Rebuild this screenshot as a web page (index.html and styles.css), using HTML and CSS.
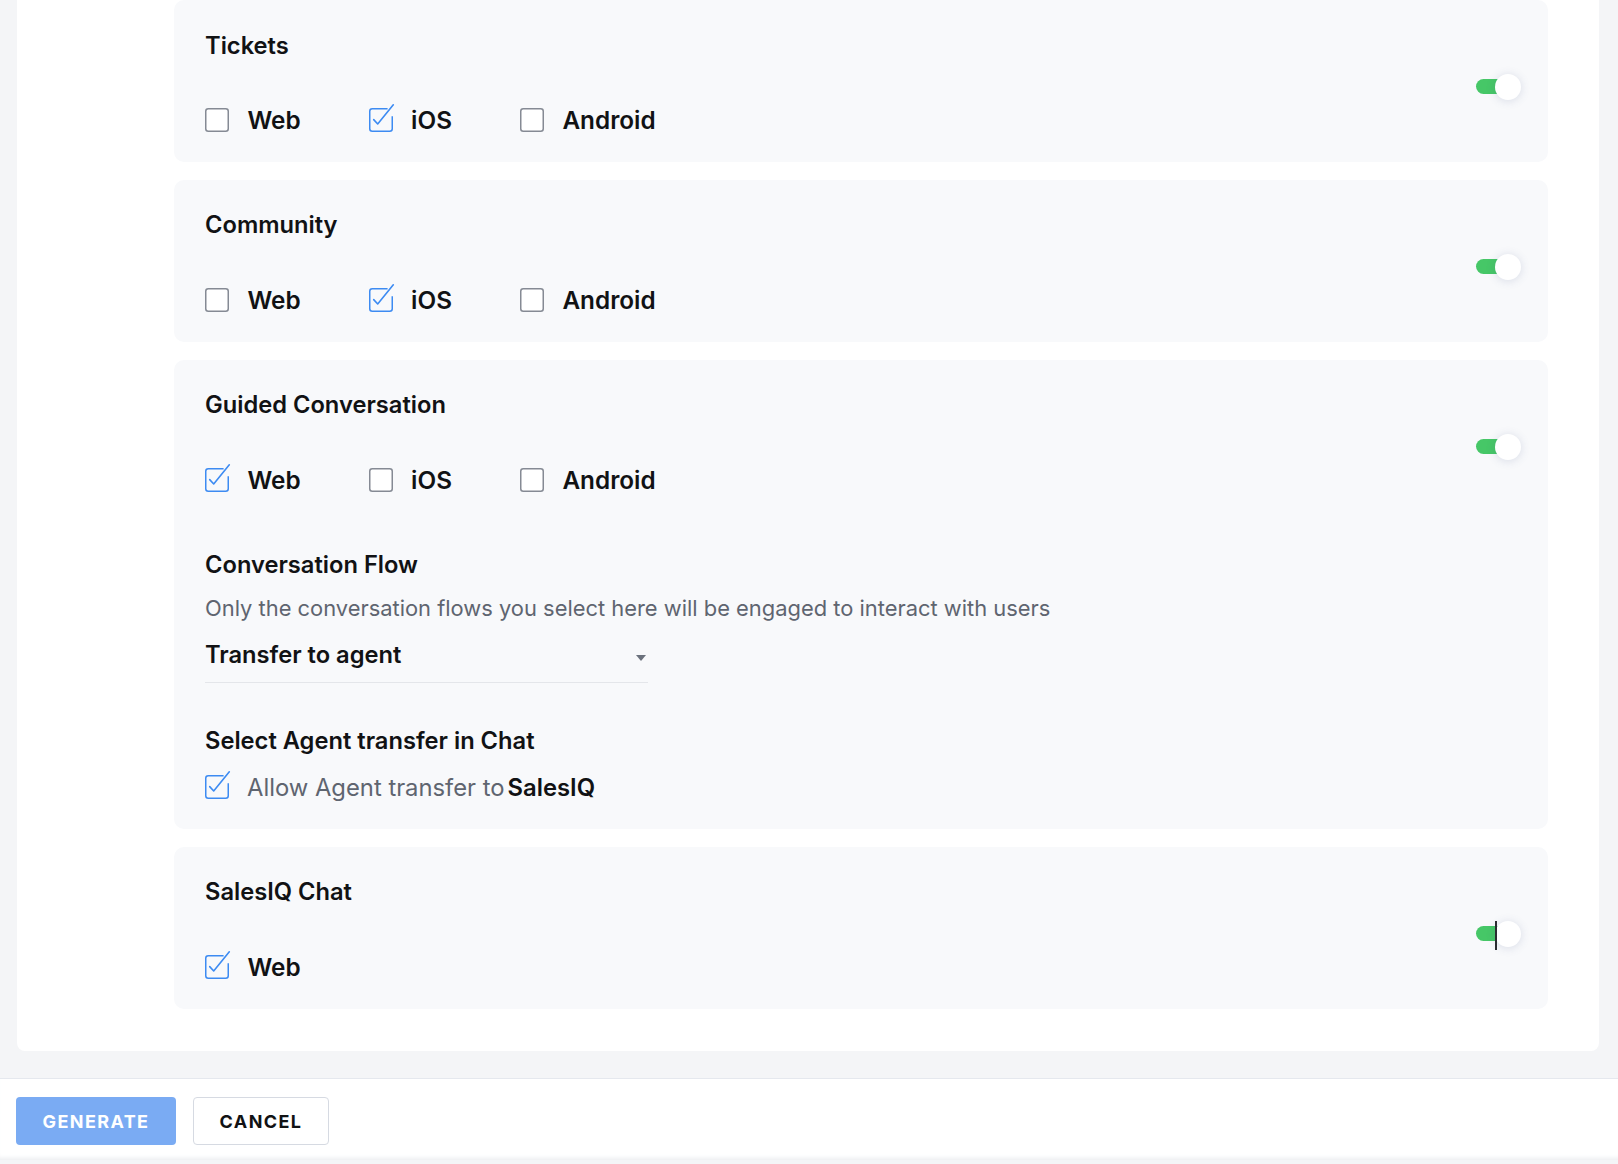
FILE: index.html
```html
<!DOCTYPE html>
<html lang="en">
<head>
    <meta charset="UTF-8">
    <title>Channels</title>
    <link rel="stylesheet" href="styles.css">
</head>
<body>
    <div class="main">
        <div class="panel">

            <div class="card">
                <div class="card-body">
                    <div class="card-title">Tickets</div>
                    <div class="options">
                        <label class="option"><span class="box"></span>Web</label>
                        <label class="option"><span class="box checked"></span>iOS</label>
                        <label class="option"><span class="box"></span>Android</label>
                    </div>
                </div>
                <div class="toggle"><span class="track"></span><span class="knob"></span></div>
            </div>

            <div class="card">
                <div class="card-body">
                    <div class="card-title">Community</div>
                    <div class="options">
                        <label class="option"><span class="box"></span>Web</label>
                        <label class="option"><span class="box checked"></span>iOS</label>
                        <label class="option"><span class="box"></span>Android</label>
                    </div>
                </div>
                <div class="toggle"><span class="track"></span><span class="knob"></span></div>
            </div>

            <div class="card">
                <div class="card-body">
                    <div class="card-title">Guided Conversation</div>
                    <div class="options">
                        <label class="option"><span class="box checked"></span>Web</label>
                        <label class="option"><span class="box"></span>iOS</label>
                        <label class="option"><span class="box"></span>Android</label>
                    </div>

                    <div class="sub-title flow-title">Conversation Flow</div>
                    <div class="desc">Only the conversation flows you select here will be engaged to interact with users</div>
                    <div class="select">
                        <span>Transfer to agent</span>
                        <span class="caret"></span>
                    </div>

                    <div class="sub-title agent-title">Select Agent transfer in Chat</div>
                    <label class="option allow"><span class="box checked"></span><span class="allow-text">Allow Agent transfer to</span><b>SalesIQ</b></label>
                </div>
                <div class="toggle"><span class="track"></span><span class="knob"></span></div>
            </div>

            <div class="card">
                <div class="card-body">
                    <div class="card-title">SalesIQ Chat</div>
                    <div class="options">
                        <label class="option"><span class="box checked"></span>Web</label>
                    </div>
                </div>
                <div class="toggle"><span class="track"></span><span class="knob"></span><span class="cursor"></span></div>
            </div>

        </div>
    </div>

    <div class="footer">
        <button class="btn btn-primary">GENERATE</button>
        <button class="btn btn-default">CANCEL</button>
    </div>

    <svg width="0" height="0" style="position:absolute">
        <defs>
            <symbol id="cb-off" viewBox="0 0 24 24">
                <rect x="0.75" y="0.75" width="22.5" height="22.5" rx="2.5" fill="#ffffff" stroke="#858a94" stroke-width="1.5"/>
            </symbol>
        </defs>
    </svg>

    <script>
        // draw the checkbox glyphs
        var boxes = document.querySelectorAll(".box");
        for (var i = 0; i < boxes.length; i++) {
            if (boxes[i].className.indexOf("checked") > -1) {
                boxes[i].innerHTML = '<svg width="24" height="24" viewBox="0 0 24 24">' +
                    '<path d="M18.6 0.75 H3.25 A2.5 2.5 0 0 0 0.75 3.25 V20.75 A2.5 2.5 0 0 0 3.25 23.25 H20.75 A2.5 2.5 0 0 0 23.25 20.75 V8.2" fill="none" stroke="#3d8bf2" stroke-width="1.5"/>' +
                    '<path d="M4.7 11.6 L8.7 16 L24.3 -3.2" fill="none" stroke="#3d8bf2" stroke-width="1.6" stroke-linecap="round" stroke-linejoin="round"/>' +
                    '</svg>';
            } else {
                boxes[i].innerHTML = '<svg width="24" height="24"><use href="#cb-off"/></svg>';
            }
        }
    </script>
</body>
</html>
```

FILE: styles.css
```css
* {
    margin: 0;
    padding: 0;
    box-sizing: border-box;
}

html, body {
    width: 100%;
    height: 100%;
}

body {
    background-color: #f4f5f7;
    font-family: Inter, "Noto Sans", sans-serif;
    color: #111214;
    overflow: hidden;
}

.main {
    padding: 0 19px 27px 17px;
}

.panel {
    margin-top: -20px;
    padding: 20px 51px 42px 157px;
    background-color: #ffffff;
    border-radius: 8px;
    display: flex;
    flex-direction: column;
    gap: 18px;
}

/* one block per channel */
.card {
    display: flex;
    align-items: flex-start;
    background-color: #f8f9fb;
    border-radius: 10px;
    padding: 30px 27px 27px 31px;
}

.card:first-child .card-title {
    margin-top: 1px;
    margin-bottom: -1px;
}

.card-body {
    flex: 1;
}

.card-title,
.sub-title {
    font-size: 23.7px;
    line-height: 30px;
    font-weight: 600;
}

.options {
    display: flex;
    margin-top: 45px;
}

.option {
    display: flex;
    align-items: center;
    height: 30px;
    font-size: 24.3px;
    font-weight: 600;
    margin-right: 68px;
}

.box {
    width: 24px;
    height: 24px;
    margin-right: 18.5px;
    flex-shrink: 0;
}

.box svg {
    display: block;
    overflow: visible;
}

.flow-title {
    margin-top: 55px;
}

.desc {
    margin-top: 14px;
    font-size: 21.9px;
    line-height: 28px;
    color: #5f6570;
}

.select {
    width: 443px;
    margin-top: 18px;
    padding-bottom: 12px;
    border-bottom: 1px solid #e4e6ea;
    display: flex;
    align-items: center;
    justify-content: space-between;
    font-size: 23.7px;
    line-height: 30px;
    font-weight: 600;
}

.caret {
    width: 0;
    height: 0;
    margin: 5px 2px 0 0;
    border-left: 5.5px solid transparent;
    border-right: 5.5px solid transparent;
    border-top: 6px solid #6b717c;
}

.agent-title {
    margin-top: 43px;
}

.allow {
    margin-top: 16px;
    font-weight: 400;
    font-size: 23.8px;
}

.allow .box {
    margin-right: 18px;
}

.allow-text {
    color: #5f6570;
    margin-right: 3px;
}

.allow b {
    font-weight: 600;
}

/* switch */
.toggle {
    position: relative;
    width: 45px;
    height: 26px;
    margin-top: 44px;
    flex-shrink: 0;
}

.track {
    position: absolute;
    left: 0;
    top: 5px;
    width: 38px;
    height: 15px;
    border-radius: 8px;
    background-color: #46c767;
}

.knob {
    position: absolute;
    right: 0;
    top: 0;
    width: 26px;
    height: 26px;
    border-radius: 50%;
    background-color: #ffffff;
    box-shadow: 0 1px 10px rgba(70, 90, 140, 0.18);
}

.cursor {
    position: absolute;
    left: 19px;
    top: 0;
    width: 2px;
    height: 29px;
    background-color: #2a2c30;
}

.footer {
    border-top: 1px solid #e5e8ee;
    background-color: #ffffff;
    padding: 18px 16px 15px;
    display: flex;
    gap: 17px;
    box-shadow: inset 0 -5px 4px -3px #eceef1;
}

.btn {
    height: 48px;
    border-radius: 4px;
    font-family: Inter, "Noto Sans", sans-serif;
    font-size: 18px;
    font-weight: 700;
    letter-spacing: 1.4px;
}

.btn-primary {
    width: 160px;
    border: none;
    background-color: #7aabf3;
    color: #ffffff;
}

.btn-default {
    width: 136px;
    border: 1px solid #d6dae2;
    background-color: #ffffff;
    color: #111214;
}
```
